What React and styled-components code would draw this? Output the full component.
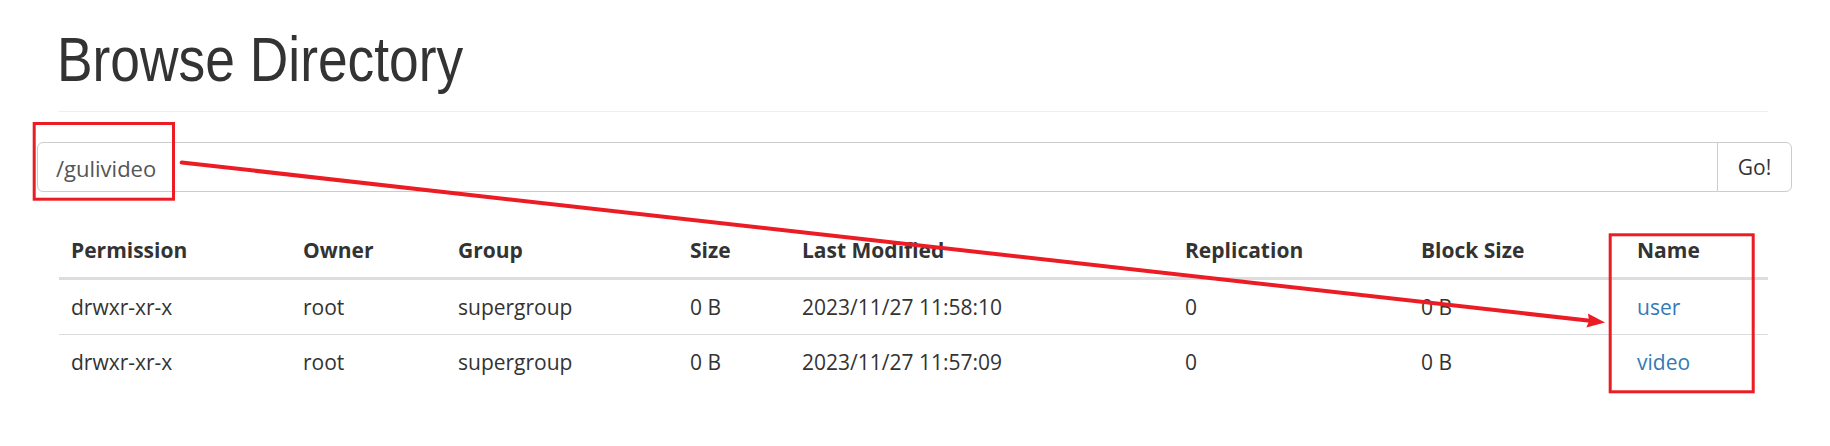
import React from "react";
import styled, { createGlobalStyle } from "styled-components";

const GlobalStyle = createGlobalStyle`
  html, body { margin: 0; padding: 0; background: #fff; }
  body {
    font-family: "Open Sans", "Noto Sans", sans-serif;
    font-size: 21px;
    line-height: 30px;
    color: #333;
  }
  * { box-sizing: border-box; }
`;

const Page = styled.div`
  position: relative;
  width: 1830px;
  height: 446px;
  overflow: hidden;
`;

const Container = styled.div`
  padding: 0 62px 0 59px;
`;

const PageHeader = styled.div`
  padding: 25px 0 17px;
  border-bottom: 1px solid #eee;
`;

const Title = styled.h1`
  margin: 0 0 0 -2px;
  display: inline-block;
  font-family: "Liberation Sans", Arial, sans-serif;
  font-weight: 400;
  font-size: 63px;
  line-height: 69px;
  color: #333;
  transform: scaleX(0.847);
  transform-origin: left center;
  white-space: nowrap;
`;

const SearchForm = styled.form`
  display: flex;
  margin: 30px -24px 0 -22px;
  height: 50px;
`;

const PathInput = styled.input`
  flex: 1;
  height: 50px;
  margin: 0;
  padding: 2px 18px 0;
  font-family: "Open Sans", sans-serif;
  font-size: 22px;
  line-height: normal;
  color: #555;
  background: #fff;
  border: 1px solid #ccc;
  border-radius: 6px 0 0 6px;
  outline: none;
`;

const GoButton = styled.button`
  width: 75px;
  height: 50px;
  margin: 0 0 0 -1px;
  padding: 0 18px;
  font-family: "Open Sans", sans-serif;
  font-size: 21px;
  color: #333;
  background: #fff;
  border: 1px solid #ccc;
  border-radius: 0 6px 6px 0;
  cursor: pointer;
`;

const Table = styled.table`
  width: 100%;
  margin-top: 31px;
  border-collapse: collapse;
  border-spacing: 0;
  table-layout: fixed;
`;

const HeadCell = styled.th`
  padding: 12px;
  text-align: left;
  font-weight: 700;
  vertical-align: bottom;
  border-bottom: 3px solid #ddd;
  white-space: nowrap;
`;

const BodyRow = styled.tr`
  & + & td { border-top: 1px solid #ddd; }
`;

const Cell = styled.td`
  padding: 12px;
  vertical-align: top;
  white-space: nowrap;
`;

const NameLink = styled.a`
  color: #337ab7;
  text-decoration: none;
`;

const Annotations = styled.svg`
  position: absolute;
  left: 0;
  top: 0;
  pointer-events: none;
`;

const columns = [
  ["Permission", 232],
  ["Owner", 155],
  ["Group", 232],
  ["Size", 112],
  ["Last Modified", 383],
  ["Replication", 236],
  ["Block Size", 216],
  ["Name", 143],
];

const rows = [
  ["drwxr-xr-x", "root", "supergroup", "0 B", "2023/11/27 11:58:10", "0", "0 B", "user"],
  ["drwxr-xr-x", "root", "supergroup", "0 B", "2023/11/27 11:57:09", "0", "0 B", "video"],
];

const RED = "#ec1c24";

export default function App() {
  return (
    <Page>
      <GlobalStyle />
      <Container>
        <PageHeader>
          <Title>Browse Directory</Title>
        </PageHeader>
        <SearchForm onSubmit={(e) => e.preventDefault()}>
          <PathInput defaultValue="/gulivideo" />
          <GoButton type="submit">Go!</GoButton>
        </SearchForm>
        <Table>
          <colgroup>
            {columns.map(([name, w]) => (
              <col key={name} style={{ width: w }} />
            ))}
          </colgroup>
          <thead>
            <tr>
              {columns.map(([name]) => (
                <HeadCell key={name}>{name}</HeadCell>
              ))}
            </tr>
          </thead>
          <tbody>
            {rows.map((r) => (
              <BodyRow key={r[7]}>
                {r.slice(0, 7).map((v, i) => (
                  <Cell key={i}>{v}</Cell>
                ))}
                <Cell>
                  <NameLink href="#">{r[7]}</NameLink>
                </Cell>
              </BodyRow>
            ))}
          </tbody>
        </Table>
      </Container>
      <Annotations width="1830" height="446" viewBox="0 0 1830 446">
        <rect x="34.2" y="123.5" width="139.3" height="75.7" fill="none" stroke={RED} strokeWidth="3" />
        <rect x="1610.2" y="234.8" width="143" height="157" fill="none" stroke={RED} strokeWidth="3" />
        <line x1="181.7" y1="162.5" x2="1590" y2="320.8" stroke={RED} strokeWidth="4" strokeLinecap="round" />
        <polygon points="1605,322.5 1586.3,327.5 1589.2,320.9 1587.9,313.5" fill={RED} />
      </Annotations>
    </Page>
  );
}
